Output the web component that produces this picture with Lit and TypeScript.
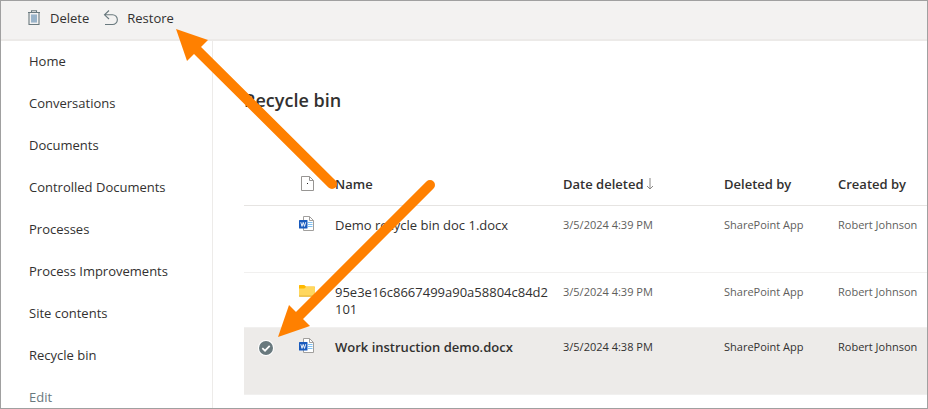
import { LitElement, html, css, svg, nothing } from "lit";
import { customElement, state } from "lit/decorators.js";
import { classMap } from "lit/directives/class-map.js";

type Kind = "word" | "folder";

interface Item {
  id: string;
  kind: Kind;
  name: string;
  deleted: string;
  deletedBy: string;
  createdBy: string;
}

const NAV = [
  "Home",
  "Conversations",
  "Documents",
  "Controlled Documents",
  "Processes",
  "Process Improvements",
  "Site contents",
  "Recycle bin",
];

const ITEMS: Item[] = [
  { id: "a", kind: "word", name: "Demo recycle bin doc 1.docx", deleted: "3/5/2024 4:39 PM", deletedBy: "SharePoint App", createdBy: "Robert Johnson" },
  { id: "b", kind: "folder", name: "95e3e16c8667499a90a58804c84d2101", deleted: "3/5/2024 4:39 PM", deletedBy: "SharePoint App", createdBy: "Robert Johnson" },
  { id: "c", kind: "word", name: "Work instruction demo.docx", deleted: "3/5/2024 4:38 PM", deletedBy: "SharePoint App", createdBy: "Robert Johnson" },
];

const trashIcon = html`<svg class="icon" viewBox="0 0 16 16" aria-hidden="true">
  <path d="M2 2.500h12M5.500 2.500V0.700h5v1.800M3 2.500v12h10v-12" fill="none" stroke="#69797e" stroke-width="1.100" />
  <path d="M5 4.500h6v8h-6z" fill="#b9cfe2" />
  <path d="M6 4.500v8M8 4.500v8M10 4.500v8" stroke="#7b98b0" stroke-width="1" />
</svg>`;

const undoIcon = html`<svg class="icon" viewBox="0 0 16 16" aria-hidden="true">
  <path d="M6 0.500L1.500 4.800L6 9M1.500 4.800H9.500a4.800 4.800 0 0 1 0 9.700H2" fill="none" stroke="#69797e" stroke-width="1.100" />
</svg>`;

const pageIcon = html`<svg class="icon" viewBox="0 0 16 16" role="img" aria-label="File type">
  <path d="M2.500 0.500h8l4 4v10h-12zM10.500 0.500v4h4" fill="#fff" stroke="#979593" />
  <rect x="8" y="7" width="1" height="1" fill="#201f1e" />
</svg>`;

const wordIcon = html`<svg class="icon" viewBox="0 0 16 16" role="img" aria-label="Word document">
  <path d="M4.500 0.500h6l4 4v10h-10z" fill="#fff" stroke="#a19f9d" />
  <path d="M10.500 0.500v4h4" fill="none" stroke="#a19f9d" />
  <path d="M9 6.500h4.500M9 8.500h4.500M9 10.500h4.500" stroke="#7fc0f2" stroke-width="1.200" />
  <rect x="0" y="4" width="8.500" height="8.500" rx="0.600" fill="#185abd" />
  <path d="M1.800 6.200l1.200 4.200L4.200 6.400l1.300 4L6.700 6.200" fill="none" stroke="#fff" stroke-width="0.900" />
</svg>`;

const folderIcon = html`<svg class="icon" viewBox="0 0 16 16" role="img" aria-label="Folder">
  <path d="M0 2.600q0-.600.600-.600h4.600L7 3.500h8.400q.600 0 .600.600v4H0z" fill="#ffb900" />
  <path d="M0 5.500h5.300L7 4h8.400q.600 0 .600.600v8.400q0 .600-.600.600H.600Q0 13.600 0 13z" fill="#ffd75e" />
  <path d="M0 12.500h16v.500q0 .800-.600.800H.600Q0 13.800 0 13z" fill="#e8b93c" />
</svg>`;

const checkIcon = html`<svg class="tick" viewBox="0 0 16 16" aria-hidden="true">
  <circle cx="8" cy="8" r="8" fill="#fff" />
  <circle cx="8" cy="8" r="7" fill="#69797e" />
  <path d="M4.300 8.200L7 10.700L11.700 5.800" fill="none" stroke="#fff" stroke-width="1.700" />
</svg>`;

const sortIcon = html`<svg class="sort" viewBox="0 0 8 12" aria-hidden="true">
  <path d="M4 0v11M1 8l3 3l3-3" fill="none" stroke="#8a8886" />
</svg>`;

const arrow = (head: string, x1: number, y1: number, x2: number, y2: number) => svg`
  <polygon class="head" points=${head} />
  <line class="shaft" x1=${x1} y1=${y1} x2=${x2} y2=${y2} />`;

@customElement("app-root")
export class AppRoot extends LitElement {
  @state() private selected = "c";

  static styles = css`
    * { box-sizing: border-box; }
    :host {
      position: relative;
      display: grid;
      grid-template-rows: auto 1fr;
      box-sizing: border-box;
      height: 100vh;
      overflow: hidden;
      border: 1px solid #a0a0a0;
      background: #fff;
      color: #323130;
      font: 13px/20px "Open Sans", "Noto Sans", sans-serif;
    }
    .toolbar {
      display: flex;
      gap: 14px;
      padding: 7px 25px 11px;
      background: #f3f2f1;
      border-bottom: 2px solid #eceae8;
    }
    .command {
      display: flex;
      align-items: center;
      gap: 8px;
      padding: 0;
      border: 0;
      background: none;
      color: inherit;
      font: inherit;
    }
    .icon { display: block; width: 16px; height: 16px; }
    .body {
      display: grid;
      grid-template-columns: 212px minmax(0, 1fr);
      min-height: 0;
    }
    .nav {
      display: flex;
      flex-direction: column;
      gap: 22px;
      padding: 10px 28px 0;
      border-right: 1px solid #edebe9;
    }
    .link { color: inherit; text-decoration: none; }
    .edit { color: #69797e; }
    .main { padding: 47px 0 0 31px; }
    .title { margin: 0; font-size: 18px; line-height: 24px; font-weight: 600; }
    .list {
      width: 100%;
      margin-top: 52px;
      border-collapse: separate;
      border-spacing: 0;
      table-layout: fixed;
    }
    .list th {
      height: 42px;
      padding: 0 0 2px;
      border-bottom: 1px solid #e6e4e2;
      text-align: left;
      font-weight: 600;
      white-space: nowrap;
    }
    .list td {
      height: 67px;
      padding: 10px 0 0;
      border-bottom: 1px solid #f1f0ef;
      vertical-align: top;
      font-size: 11px;
      line-height: 17px;
      color: #605e5c;
      white-space: nowrap;
    }
    .list tr.folder td { height: 55px; }
    .list td.name {
      padding: 11px 12px 0 0;
      color: #323130;
      font-size: 13px;
      white-space: normal;
      overflow-wrap: anywhere;
    }
    .list tr.selected td { background: #edebe9; color: #323130; }
    .list tr.selected .name { font-weight: 600; }
    .list .type { padding-left: 11px; }
    .check-col { width: 44px; }
    .type-col { width: 47px; }
    .name-col { width: 228px; }
    .date-col { width: 161px; }
    .by-col { width: 114px; }
    .pick {
      display: grid;
      width: 16px;
      margin: 2px 0 0 14px;
      opacity: 0;
    }
    .pick > * { grid-area: 1 / 1; width: 16px; height: 16px; margin: 0; }
    .pick input { opacity: 0; }
    .selected .pick, .pick:hover { opacity: 1; }
    .sort { width: 8px; height: 12px; margin-left: 2px; vertical-align: -1px; }
    .marks {
      position: absolute;
      top: -1px;
      left: -1px;
      width: 928px;
      height: 409px;
      pointer-events: none;
    }
    .head { fill: #ff8000; }
    .shaft { stroke: #ff8000; stroke-width: 10px; stroke-linecap: round; }
  `;

  private row(item: Item) {
    const selected = item.id === this.selected;
    return html`<tr class=${classMap({ selected, folder: item.kind === "folder" })}>
      <td>
        <label class="pick">
          <input type="checkbox" aria-label=${"Select " + item.name} .checked=${selected}
            @change=${() => (this.selected = selected ? "" : item.id)} />
          ${checkIcon}
        </label>
      </td>
      <td class="type">${item.kind === "word" ? wordIcon : folderIcon}</td>
      <td class="name">${item.name}</td>
      <td>${item.deleted}</td>
      <td>${item.deletedBy}</td>
      <td>${item.createdBy}</td>
    </tr>`;
  }

  render() {
    return html`
      <div class="toolbar">
        <button class="command">${trashIcon}Delete</button>
        <button class="command">${undoIcon}Restore</button>
      </div>
      <div class="body">
        <nav class="nav">
          ${NAV.map((label) => html`<a class="link" href="#" aria-current=${label === "Recycle bin" ? "page" : nothing}>${label}</a>`)}
          <a class="link edit" href="#">Edit</a>
        </nav>
        <main class="main">
          <h1 class="title">Recycle bin</h1>
          <table class="list">
            <colgroup>
              <col class="check-col" /><col class="type-col" /><col class="name-col" />
              <col class="date-col" /><col class="by-col" /><col />
            </colgroup>
            <thead>
              <tr>
                <th></th>
                <th class="type">${pageIcon}</th>
                <th>Name</th>
                <th>Date deleted${sortIcon}</th>
                <th>Deleted by</th>
                <th>Created by</th>
              </tr>
            </thead>
            <tbody>${ITEMS.map((item) => this.row(item))}</tbody>
          </table>
        </main>
      </div>
      <svg class="marks" viewBox="0 0 928 409" aria-hidden="true">
        ${arrow("176,29 208,40 187,61", 332, 184, 194, 47)}
        ${arrow("278,337 289,305 310,326", 430, 185, 297, 318)}
      </svg>
    `;
  }
}
